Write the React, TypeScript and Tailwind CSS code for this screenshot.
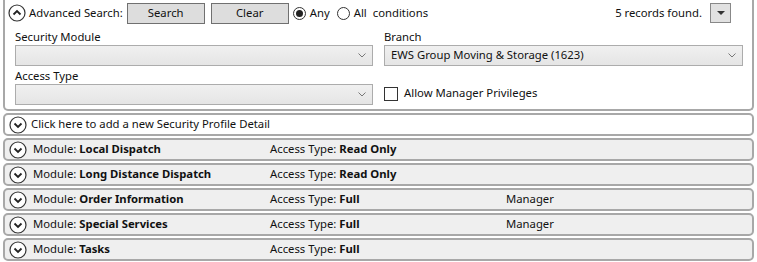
import React from "react";

type Row = {
  module: string;
  access: string;
  manager: boolean;
};

const rows: Row[] = [
  { module: "Local Dispatch", access: "Read Only", manager: false },
  { module: "Long Distance Dispatch", access: "Read Only", manager: false },
  { module: "Order Information", access: "Full", manager: true },
  { module: "Special Services", access: "Full", manager: true },
  { module: "Tasks", access: "Full", manager: false },
];

function Chevron({ up }: { up?: boolean }) {
  return (
    <svg width="18" height="18" viewBox="0 0 18 18" className="shrink-0">
      <circle cx="9" cy="9" r="8" fill="white" stroke="#333" strokeWidth="1.2" />
      <path
        d={up ? "M5.5 10.5 L9 7 L12.5 10.5" : "M5.5 7.5 L9 11 L12.5 7.5"}
        fill="none"
        stroke="#222"
        strokeWidth="1.8"
      />
    </svg>
  );
}

function Combo({ text }: { text?: string }) {
  return (
    <div className="h-[21px] flex items-center justify-between border border-[#acacac] bg-gradient-to-b from-[#f0f0f0] to-[#e5e5e5] px-[6px]">
      <span>{text}</span>
      <svg width="8" height="5" viewBox="0 0 8 5">
        <path d="M0.5 0.5 L4 4 L7.5 0.5" fill="none" stroke="#777" strokeWidth="1" />
      </svg>
    </div>
  );
}

export default function App() {
  return (
    <div
      className="w-[757px] h-[262px] bg-white text-[11.3px] text-[#111] overflow-hidden"
      style={{ fontFamily: '"Noto Sans", "Open Sans", sans-serif' }}
    >
      <div className="mx-[3px] h-[111px] border-2 border-t-0 border-[#a8a8a8] rounded-b-[5px] bg-white">
        <div className="flex items-center h-[25px] pt-[1px] pl-[3px] pr-[21px]">
          <Chevron up />
          <span className="ml-[3px]">Advanced Search:</span>
          <button className="ml-[4px] w-[78px] h-[21px] bg-[#dddddd] border border-[#707070]">Search</button>
          <button className="ml-[6px] w-[78px] h-[21px] bg-[#dddddd] border border-[#707070]">Clear</button>
          <span className="ml-[4px] w-[13px] h-[13px] rounded-full border border-[#333] bg-white flex items-center justify-center">
            <span className="w-[7px] h-[7px] rounded-full bg-[#222]" />
          </span>
          <span className="ml-[4px]">Any</span>
          <span className="ml-[7px] w-[13px] h-[13px] rounded-full border border-[#333] bg-white" />
          <span className="ml-[4px]">All</span>
          <span className="ml-[6px]">conditions</span>
          <span className="ml-auto">5 records found.</span>
          <div className="ml-[8px] w-[21px] h-[20px] bg-[#e1e1e1] border border-[#888] flex items-center justify-center">
            <svg width="8" height="4" viewBox="0 0 8 4">
              <path d="M0 0 L8 0 L4 4 Z" fill="#333" />
            </svg>
          </div>
        </div>
        <div className="grid grid-cols-[358px_359px] gap-x-[11px] px-[10px] pt-[4px]">
          <div>
            <div className="h-[16px] leading-[16px]">Security Module</div>
            <Combo />
          </div>
          <div>
            <div className="h-[16px] leading-[16px]">Branch</div>
            <Combo text="EWS Group Moving & Storage (1623)" />
          </div>
          <div className="mt-[2px]">
            <div className="h-[16px] leading-[16px]">Access Type</div>
            <Combo />
          </div>
          <div className="mt-[2px] flex items-end">
            <div className="h-[21px] flex items-center pb-[2px]">
              <span className="w-[14px] h-[14px] border border-[#333] bg-white" />
              <span className="ml-[6px]">Allow Manager Privileges</span>
            </div>
          </div>
        </div>
      </div>

      <div className="mx-[3px] mt-[2px] h-[23px] flex items-center pl-[4px] border-2 border-[#a8a8a8] rounded-[5px] bg-white">
        <Chevron />
        <span className="ml-[4px]">Click here to add a new Security Profile Detail</span>
      </div>

      {rows.map((r) => (
        <div
          key={r.module}
          className="mx-[3px] mt-[2px] h-[23px] flex items-center pl-[4px] border-2 border-[#a8a8a8] rounded-[5px] bg-[#efefef]"
        >
          <Chevron />
          <span className="ml-[6px] w-[237px]">
            Module: <b>{r.module}</b>
          </span>
          <span className="w-[236px]">
            Access Type: <b>{r.access}</b>
          </span>
          {r.manager && <span>Manager</span>}
        </div>
      ))}
    </div>
  );
}
